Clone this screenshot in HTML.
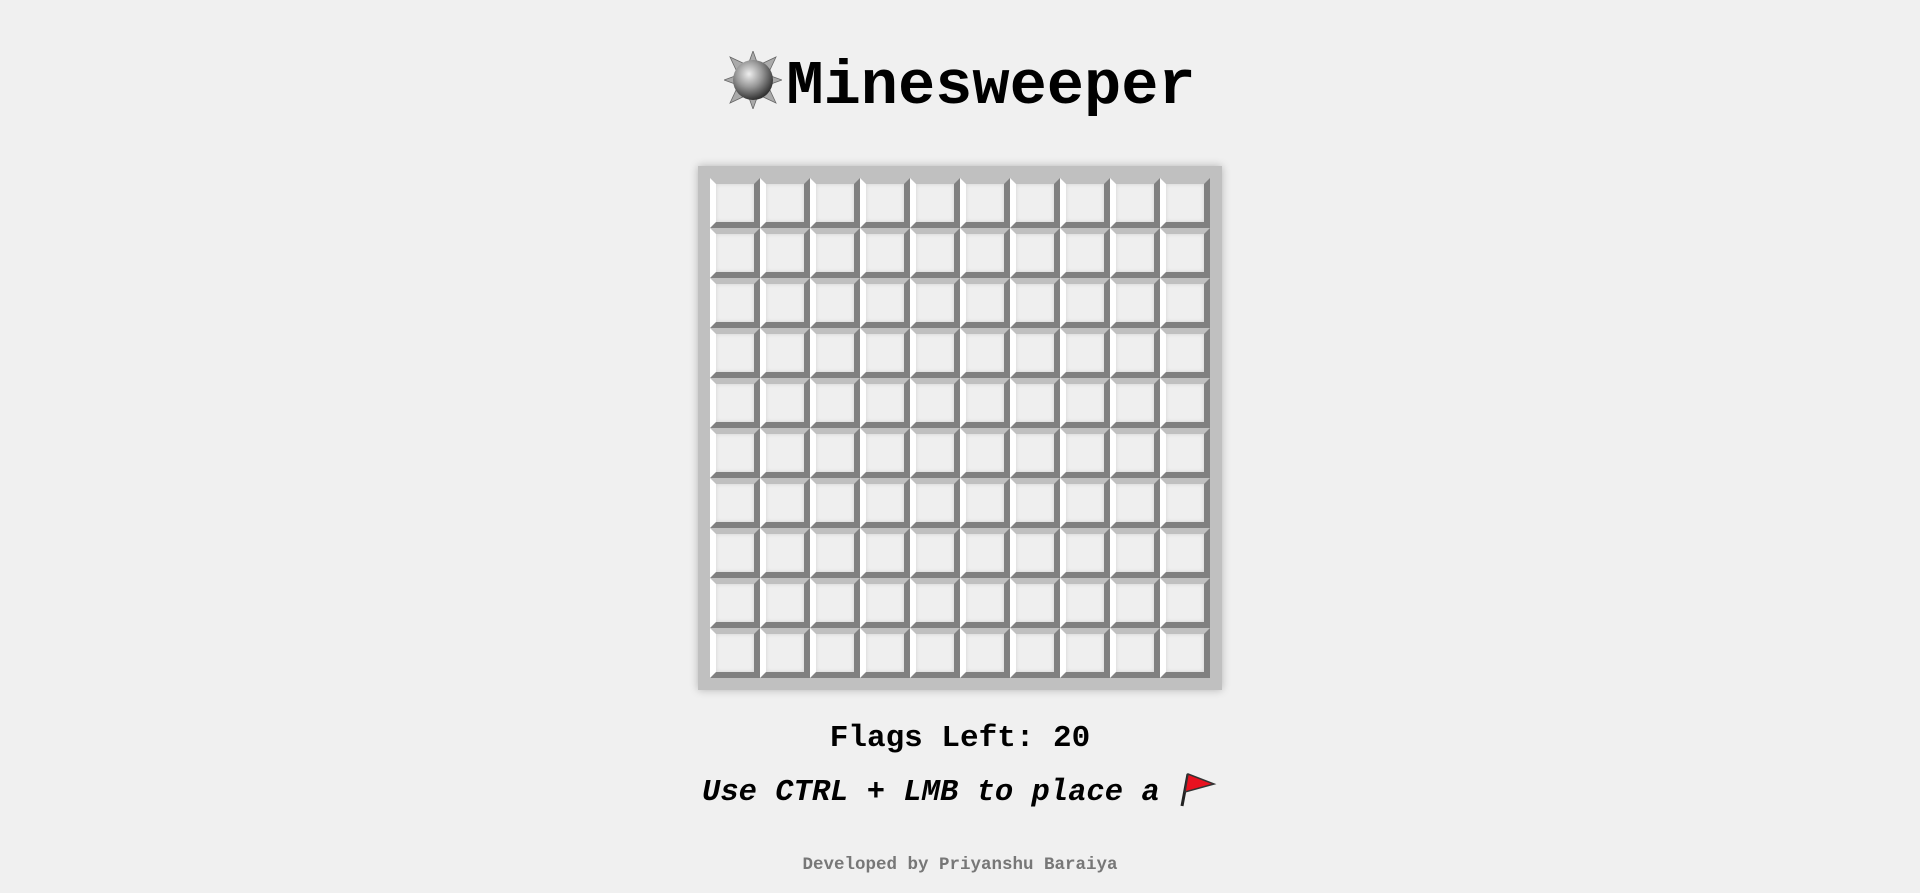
<!DOCTYPE html>
<html><head><style>
body{margin:0;background:#f0f0f0;width:1920px;height:893px;overflow:hidden;font-family:"Liberation Mono",monospace;}
h1{position:absolute;left:0;width:1920px;top:47px;margin:0;text-align:center;font-size:62px;font-weight:bold;line-height:80px;color:#000;}
h1 svg{vertical-align:-6px;margin-right:4px}
#board{position:absolute;left:698px;top:166px;width:500px;height:500px;padding:12px;background:#c0c0c0;box-shadow:0 0 8px rgba(0,0,0,.25);display:grid;grid-template-columns:repeat(10,50px);grid-template-rows:repeat(10,50px);}
.c{box-sizing:border-box;width:50px;height:50px;border:6px solid;border-color:#c0c0c0 #808080 #808080 #fff;background:#efefef;box-shadow:inset 0 0 4px rgba(0,0,0,.12);}
.t{position:absolute;left:0;width:1920px;text-align:center;color:#000;}
</style></head><body>
<h1><svg width="58" height="58" viewBox="0 0 58 58"><defs><radialGradient id="g" cx="40%" cy="35%" r="65%"><stop offset="0" stop-color="#eee"/><stop offset=".5" stop-color="#999"/><stop offset="1" stop-color="#333"/></radialGradient></defs>
<g fill="#aaa" stroke="#666" stroke-width=".8"><polygon points="29,0 34,14 24,14"/><polygon points="29,58 34,44 24,44"/><polygon points="0,29 14,24 14,34"/><polygon points="58,29 44,24 44,34"/><polygon points="6,6 21,13 13,21"/><polygon points="52,6 45,21 37,13"/><polygon points="6,52 13,37 21,45"/><polygon points="52,52 37,45 45,37"/></g>
<circle cx="29" cy="29" r="20" fill="url(#g)"/></svg>Minesweeper</h1>
<div id="board">
<div class="c"></div><div class="c"></div><div class="c"></div><div class="c"></div><div class="c"></div><div class="c"></div><div class="c"></div><div class="c"></div><div class="c"></div><div class="c"></div>
<div class="c"></div><div class="c"></div><div class="c"></div><div class="c"></div><div class="c"></div><div class="c"></div><div class="c"></div><div class="c"></div><div class="c"></div><div class="c"></div>
<div class="c"></div><div class="c"></div><div class="c"></div><div class="c"></div><div class="c"></div><div class="c"></div><div class="c"></div><div class="c"></div><div class="c"></div><div class="c"></div>
<div class="c"></div><div class="c"></div><div class="c"></div><div class="c"></div><div class="c"></div><div class="c"></div><div class="c"></div><div class="c"></div><div class="c"></div><div class="c"></div>
<div class="c"></div><div class="c"></div><div class="c"></div><div class="c"></div><div class="c"></div><div class="c"></div><div class="c"></div><div class="c"></div><div class="c"></div><div class="c"></div>
<div class="c"></div><div class="c"></div><div class="c"></div><div class="c"></div><div class="c"></div><div class="c"></div><div class="c"></div><div class="c"></div><div class="c"></div><div class="c"></div>
<div class="c"></div><div class="c"></div><div class="c"></div><div class="c"></div><div class="c"></div><div class="c"></div><div class="c"></div><div class="c"></div><div class="c"></div><div class="c"></div>
<div class="c"></div><div class="c"></div><div class="c"></div><div class="c"></div><div class="c"></div><div class="c"></div><div class="c"></div><div class="c"></div><div class="c"></div><div class="c"></div>
<div class="c"></div><div class="c"></div><div class="c"></div><div class="c"></div><div class="c"></div><div class="c"></div><div class="c"></div><div class="c"></div><div class="c"></div><div class="c"></div>
<div class="c"></div><div class="c"></div><div class="c"></div><div class="c"></div><div class="c"></div><div class="c"></div><div class="c"></div><div class="c"></div><div class="c"></div><div class="c"></div>
</div>
<div class="t" style="top:719px;font-size:31px;font-weight:bold;line-height:40px">Flags Left: 20</div>
<div class="t" style="top:770px;font-size:30.5px;font-weight:bold;font-style:italic;line-height:40px">Use CTRL + LMB to place a <svg width="40" height="38" viewBox="0 0 40 38" style="vertical-align:-8px"><line x1="10" y1="4" x2="4" y2="36" stroke="#222" stroke-width="3"/><path d="M10 4 L36 14 L7 22 Z" fill="#e8111f" stroke="#333" stroke-width="1.5"/></svg></div>
<div class="t" style="top:853px;font-size:17.5px;font-weight:bold;color:#777;line-height:24px">Developed by Priyanshu Baraiya</div>
</body></html>
